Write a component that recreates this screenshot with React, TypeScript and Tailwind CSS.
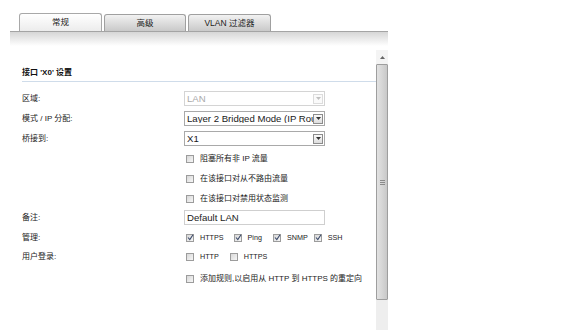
import React from "react";

const font = { fontFamily: '"Liberation Sans", "Noto Sans CJK SC", sans-serif' };

function Arrow({ disabled }: { disabled?: boolean }) {
  return (
    <div
      className={`flex h-[10px] w-[10px] items-center justify-center border ${
        disabled ? "border-[#dcdcdc] bg-[#fafafa]" : "border-[#8c8c8c] bg-gradient-to-b from-[#fafafa] to-[#dedede]"
      }`}
    >
      <svg width="5" height="3" viewBox="0 0 5 3">
        <path d="M0 0 L5 0 L2.5 3 Z" fill={disabled ? "#c0c0c0" : "#333"} />
      </svg>
    </div>
  );
}

function Select({ value, disabled }: { value: string; disabled?: boolean }) {
  return (
    <div
      className={`flex h-[15px] w-[141px] items-center justify-between overflow-hidden border bg-white pl-[2px] pr-[1px] ${
        disabled ? "border-[#d4d4d4]" : "border-[#a9a9a9]"
      }`}
    >
      <span
        className={`min-w-0 flex-1 overflow-hidden whitespace-nowrap text-[9.6px] leading-none ${
          disabled ? "text-[#aaaaaa]" : "text-[#1a1a1a]"
        }`}
      >
        {value}
      </span>
      <Arrow disabled={disabled} />
    </div>
  );
}

function Check({ checked }: { checked?: boolean }) {
  return (
    <div className="relative h-[8px] w-[8px] shrink-0 border border-[#9c9c9c] bg-gradient-to-br from-[#d8d8d8] to-[#f6f6f6]">
      {checked && (
        <svg className="absolute left-0 top-[-1px]" width="7" height="7" viewBox="0 0 7 7">
          <path d="M1 3.5 L2.8 5.5 L6 0.8" stroke="#3b4a6b" strokeWidth="1.1" fill="none" />
        </svg>
      )}
    </div>
  );
}

function Row({
  label,
  mt,
  h,
  children,
}: {
  label?: string;
  mt: string;
  h: string;
  children: React.ReactNode;
}) {
  return (
    <div className={`flex items-center ${mt} ${h}`}>
      <div className="w-[162px] text-[8px] leading-none text-[#222]">{label}</div>
      <div className="flex items-center">{children}</div>
    </div>
  );
}

function CheckLabel({ text, checked }: { text: string; checked?: boolean }) {
  return (
    <div className="ml-[2px] flex items-center">
      <Check checked={checked} />
      <span className="ml-[6px] text-[8px] leading-none text-[#222]">{text}</span>
    </div>
  );
}

function SmallCheck({ text, checked, ml }: { text: string; checked?: boolean; ml: string }) {
  return (
    <div className={`flex items-center ${ml}`}>
      <Check checked={checked} />
      <span className="ml-[6px] text-[7.2px] leading-none text-[#222]">{text}</span>
    </div>
  );
}

export default function App() {
  return (
    <div className="relative h-[330px] w-[576px] overflow-hidden bg-white" style={font}>
      {/* Tabs */}
      <div className="flex gap-[2px] pl-[19px] pt-[13px]">
        <div className="flex h-[18px] w-[83px] items-center justify-center rounded-t-[3px] border border-b-0 border-[#a8a8a8] bg-gradient-to-b from-white to-[#ececec] text-[8.5px] text-[#222]">
          常规
        </div>
        <div className="flex h-[17px] w-[82px] items-center justify-center self-end rounded-t-[3px] border border-b-0 border-[#a0a0a0] bg-gradient-to-b from-[#f2f2f2] to-[#c9c9c9] text-[8.5px] text-[#222]">
          高级
        </div>
        <div className="flex h-[17px] w-[83px] items-center justify-center self-end rounded-t-[3px] border border-b-0 border-[#a0a0a0] bg-gradient-to-b from-[#f2f2f2] to-[#c9c9c9] text-[8.5px] text-[#222]">
          VLAN 过滤器
        </div>
      </div>
      {/* Band */}
      <div className="ml-[10px] h-[15px] w-[378px] border-t border-[#a4a4a4] bg-gradient-to-b from-[#d6d6d6] to-white" />

      <div className="ml-[10px] flex w-[378px]">
        {/* Content */}
        <div className="w-[366px] pl-[12px]">
          <div className="mt-[22px] border-b border-[#cfdcea] pb-[3px] text-[8px] font-bold leading-[10px] text-[#111]">
            接口 'X0' 设置
          </div>
          <Row label="区域:" mt="mt-[9px]" h="h-[15px]">
            <Select value="LAN" disabled />
          </Row>
          <Row label="模式 / IP 分配:" mt="mt-[5px]" h="h-[15px]">
            <Select value="Layer 2 Bridged Mode (IP Route Option)" />
          </Row>
          <Row label="桥接到:" mt="mt-[5px]" h="h-[15px]">
            <Select value="X1" />
          </Row>
          <Row mt="mt-[6px]" h="h-[14px]">
            <CheckLabel text="阻塞所有非 IP 流量" />
          </Row>
          <Row mt="mt-[6px]" h="h-[14px]">
            <CheckLabel text="在该接口对从不路由流量" />
          </Row>
          <Row mt="mt-[6px]" h="h-[14px]">
            <CheckLabel text="在该接口对禁用状态监测" />
          </Row>
          <Row label="备注:" mt="mt-[4px]" h="h-[15px]">
            <div className="flex h-[15px] w-[141px] items-center border border-[#cfcfcf] bg-white pl-[2px] text-[9.6px] leading-none text-[#1a1a1a]">
              Default LAN
            </div>
          </Row>
          <Row label="管理:" mt="mt-[6px]" h="h-[14px]">
            <SmallCheck text="HTTPS" checked ml="ml-[2px]" />
            <SmallCheck text="Ping" checked ml="ml-[10px]" />
            <SmallCheck text="SNMP" checked ml="ml-[11px]" />
            <SmallCheck text="SSH" checked ml="ml-[6px]" />
          </Row>
          <Row label="用户登录:" mt="mt-[5px]" h="h-[14px]">
            <SmallCheck text="HTTP" ml="ml-[2px]" />
            <SmallCheck text="HTTPS" ml="ml-[11px]" />
          </Row>
          <Row mt="mt-[8px]" h="h-[14px]">
            <CheckLabel text="添加规则,以启用从 HTTP 到 HTTPS 的重定向" />
          </Row>
        </div>
        {/* Scrollbar */}
        <div className="mt-[4px] flex h-[281px] w-[12px] flex-col bg-[#f0f0f0]">
          <div className="flex h-[14px] items-center justify-center bg-[#f4f4f4]">
            <svg width="5" height="3" viewBox="0 0 5 3">
              <path d="M0 3 L5 3 L2.5 0 Z" fill="#666" />
            </svg>
          </div>
          <div className="flex h-[236px] items-center justify-center rounded-[1px] border border-[#9e9e9e] bg-gradient-to-r from-[#e2e2e2] via-[#d6d6d6] to-[#c8c8c8]">
            <svg width="5" height="5" viewBox="0 0 5 5">
              <path d="M0 0.5 H5 M0 2.5 H5 M0 4.5 H5" stroke="#777" strokeWidth="0.8" />
            </svg>
          </div>
          <div className="flex-1 bg-[#eeeeee]" />
        </div>
      </div>
    </div>
  );
}
